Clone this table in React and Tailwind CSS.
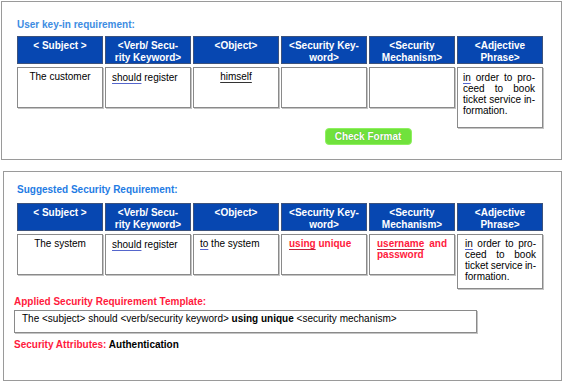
import React from "react";

const HEADERS = [
  ["< Subject >"],
  ["<Verb/ Secu-", "rity Keyword>"],
  ["<Object>"],
  ["<Security Key-", "word>"],
  ["<Security", "Mechanism>"],
  ["<Adjective", "Phrase>"],
];

const ulBlue = "underline decoration-[#5566cc] underline-offset-2";
const ulDark = "underline decoration-[#333] underline-offset-2";
const ulRed = "underline decoration-[#c0203a] underline-offset-2";

function Justified({ lines }) {
  return (
    <div className="leading-[11px]">
      {lines.map((words, i) =>
        i < lines.length - 1 ? (
          <div key={i} className="flex justify-between">
            {words.map((w, j) => (
              <span key={j}>{w}</span>
            ))}
          </div>
        ) : (
          <div key={i} className="flex gap-[3px]">
            {words.map((w, j) => (
              <span key={j}>{w}</span>
            ))}
          </div>
        )
      )}
    </div>
  );
}

function HeaderCell({ lines }) {
  return (
    <div className="h-[28px] bg-[#0747b1] border border-[#3c527c] text-white font-bold text-center leading-[11.5px] pt-[3px]">
      {lines.map((l, i) => (
        <div key={i}>{l}</div>
      ))}
    </div>
  );
}

function DataCell({ children, h = "h-[41px]", className = "" }) {
  return (
    <div
      className={`${h} self-start bg-white border border-[#8a8a8a] shadow-[1px_1px_0_#c4c4c4] ${className}`}
    >
      {children}
    </div>
  );
}

function Table({ cells, lastH }) {
  return (
    <div className="grid grid-cols-[repeat(6,86px)] gap-x-[2px] gap-y-[3px]">
      {HEADERS.map((h, i) => (
        <HeaderCell key={i} lines={h} />
      ))}
      {cells.map((c, i) => (
        <DataCell key={i} h={i === 5 ? lastH : "h-[41px]"} className={c.cls}>
          {c.content}
        </DataCell>
      ))}
    </div>
  );
}

const adjective = (
  <Justified
    lines={[
      [<span className={ulBlue}>in</span>, "order", "to", "pro-"],
      ["ceed", "to", "book"],
      ["ticket", "service", "in-"],
      ["formation."],
    ]}
  />
);

export default function App() {
  const table1 = [
    { cls: "text-center pt-[3px] leading-[12px]", content: "The customer" },
    {
      cls: "pl-[6px] pt-[4px] leading-[12px]",
      content: (
        <span>
          <span className={ulBlue}>should</span> register
        </span>
      ),
    },
    {
      cls: "text-center pt-[3px] leading-[12px]",
      content: <span className={ulDark}>himself</span>,
    },
    { cls: "", content: null },
    { cls: "", content: null },
    { cls: "pl-[5px] pr-[7px] pt-[4px]", content: adjective },
  ];

  const table2 = [
    { cls: "text-center pt-[3px] leading-[12px]", content: "The system" },
    {
      cls: "pl-[6px] pt-[4px] leading-[12px]",
      content: (
        <span>
          <span className={ulBlue}>should</span> register
        </span>
      ),
    },
    {
      cls: "pl-[6px] pt-[3px] leading-[12px]",
      content: (
        <span>
          <span className={ulBlue}>to</span> the system
        </span>
      ),
    },
    {
      cls: "pl-[7px] pt-[3px] leading-[11px] font-bold text-[#ff1a3d]",
      content: (
        <span>
          <span className={ulRed}>using</span> unique
        </span>
      ),
    },
    {
      cls: "px-[7px] pt-[3px] font-bold text-[#ff1a3d]",
      content: (
        <Justified
          lines={[
            [<span className={ulRed}>username</span>, "and"],
            ["password"],
          ]}
        />
      ),
    },
    { cls: "pl-[7px] pr-[6px] pt-[3px]", content: adjective },
  ];

  return (
    <div className="w-[564px] h-[383px] bg-white overflow-hidden pt-px pl-px text-[10px] text-black font-['Liberation_Sans',Arial,sans-serif]">
      {/* Panel 1 */}
      <div className="w-[561px] h-[159px] border border-[#9a9a9a] pl-[15px] pt-[17px]">
        <div className="font-bold text-[#3d8ce2] leading-[12px]">
          User key-in requirement:
        </div>
        <div className="mt-[5px]">
          <Table cells={table1} lastH="h-[61px]" />
        </div>
        <div className="grid grid-cols-[repeat(6,86px)] gap-x-[2px]">
          <button className="col-start-4 col-span-2 justify-self-center w-[87px] h-[17px] rounded-[4px] bg-[#70e23c] border border-[#8ef060] text-white font-bold text-[10px] leading-[15px] [text-shadow:0_0_1px_#4a9a2a] font-['Liberation_Sans',Arial,sans-serif]">
            Check Format
          </button>
        </div>
      </div>

      {/* Panel 2 */}
      <div className="ml-[2px] mt-[11px] w-[559px] h-[210px] border border-[#9a9a9a] pl-[10px] pt-[12px]">
        <div className="ml-[3px] font-bold text-[#1f7ce4] leading-[12px]">
          Suggested Security Requirement:
        </div>
        <div className="ml-[3px] mt-[7px]">
          <Table cells={table2} lastH="h-[55px]" />
        </div>
        <div className="mt-[7px] font-bold text-[#ff1a3d] leading-[12px]">
          Applied Security Requirement Template:
        </div>
        <div className="mt-[2px] w-[463px] h-[23px] border border-[#8a8a8a] shadow-[1px_1px_0_#c4c4c4] pl-[7px] pt-[2px] leading-[12px]">
          The &lt;subject&gt; should &lt;verb/security keyword&gt;{" "}
          <span className="font-bold">using unique</span> &lt;security mechanism&gt;
        </div>
        <div className="mt-[6px] font-bold leading-[12px]">
          <span className="text-[#ff1a3d]">Security Attributes: </span>
          <span>Authentication</span>
        </div>
      </div>
    </div>
  );
}
